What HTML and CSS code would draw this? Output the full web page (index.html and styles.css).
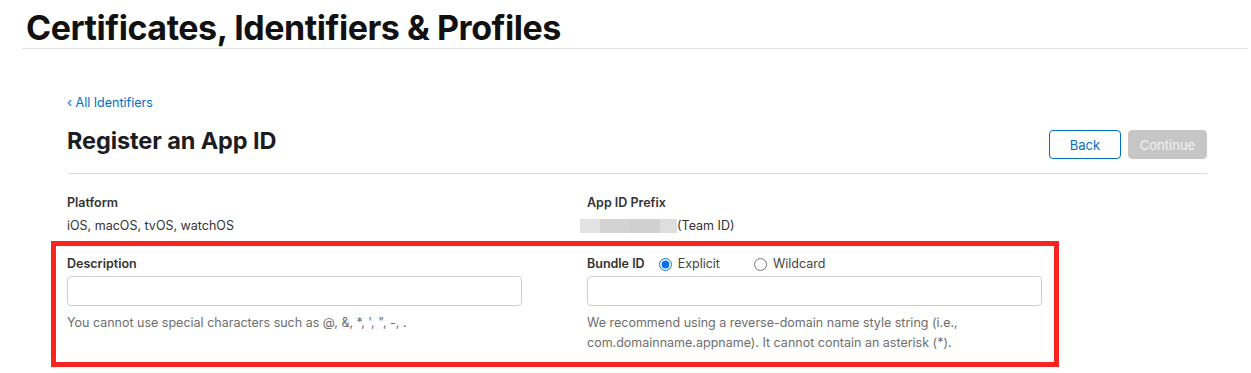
FILE: index.html
```html
<!DOCTYPE html>
<html lang="en">
<head>
<meta charset="utf-8">
<title>Register an App ID</title>
<link rel="stylesheet" href="styles.css">
</head>
<body>
<header class="topbar">
  <h1 class="page-title">Certificates, Identifiers &amp; Profiles</h1>
</header>
<main class="content">
  <a class="back-link" href="#"><span class="chev">‹</span> All Identifiers</a>
  <div class="title-row">
    <h2 class="section-title">Register an App ID</h2>
    <div class="actions">
      <button class="btn btn-back" type="button">Back</button>
      <button class="btn btn-continue" type="button" disabled>Continue</button>
    </div>
  </div>
  <div class="info-row">
    <div class="col">
      <div class="label">Platform</div>
      <div class="value">iOS, macOS, tvOS, watchOS</div>
    </div>
    <div class="col">
      <div class="label">App ID Prefix</div>
      <div class="value prefix"><span class="redact"><span class="r1"></span><span class="r2"></span><span class="r3"></span><span class="r4"></span></span>(Team ID)</div>
    </div>
  </div>
  <div class="highlight">
    <div class="form-row">
      <div class="col">
        <label class="label" for="desc">Description</label>
        <input class="field" id="desc" type="text">
        <p class="hint">You cannot use special characters such as @, &amp;, *, ', ", -, .</p>
      </div>
      <div class="col">
        <div class="label bundle-label">
          <span>Bundle ID</span>
          <label class="radio"><input type="radio" name="bid" checked><span>Explicit</span></label>
          <label class="radio radio-wild"><input type="radio" name="bid"><span>Wildcard</span></label>
        </div>
        <input class="field" type="text">
        <p class="hint">We recommend using a reverse-domain name style string (i.e.,<br>com.domainname.appname). It cannot contain an asterisk (*).</p>
      </div>
    </div>
  </div>
</main>
</body>
</html>
```

FILE: styles.css
```css
* { box-sizing: border-box; }
html, body { margin: 0; padding: 0; background: #fff; }
body {
  font-family: Inter, "Noto Sans", "Liberation Sans", sans-serif;
  color: #333;
  width: 1251px;
  overflow: hidden;
}
.topbar {
  margin: 0 4px 0 22px;
  border-bottom: 1px solid #e2e2e2;
}
.page-title {
  margin: 0;
  padding: 8px 0 0 4px;
  font-size: 34px;
  line-height: 40px;
  font-weight: 700;
  letter-spacing: -0.45px;
  color: #111;
}
.content {
  padding: 0 44px 0 67px;
}
.back-link {
  display: block;
  margin-top: 45px;
  font-size: 12.5px;
  line-height: 16px;
  color: #0070c9;
  text-decoration: none;
}
.chev { font-size: 13px; }
.title-row {
  display: flex;
  justify-content: space-between;
  align-items: flex-start;
  margin-top: 15px;
  padding-bottom: 14px;
  border-bottom: 1px solid #dcdcdc;
}
.section-title {
  margin: 0;
  font-size: 23.5px;
  line-height: 30px;
  font-weight: 700;
  color: #1d1d1f;
  letter-spacing: -0.1px;
}
.actions {
  display: flex;
  gap: 7px;
  margin-top: 4px;
}
.btn {
  height: 29px;
  border-radius: 4px;
  font-family: inherit;
  font-size: 13px;
  padding: 0;
}
.btn-back {
  width: 72px;
  background: #fff;
  border: 1px solid #0070c9;
  color: #0070c9;
}
.btn-continue {
  width: 79px;
  background: #c6c6c6;
  border: 1px solid #c6c6c6;
  color: #f2f2f2;
}
.info-row, .form-row {
  display: grid;
  grid-template-columns: 520px 520px;
}
.info-row { padding-top: 21px; }
.label {
  display: block;
  font-size: 12.5px;
  line-height: 16px;
  font-weight: 600;
  color: #333;
}
.value {
  margin-top: 7px;
  font-size: 12.5px;
  line-height: 16px;
  color: #333;
}
.prefix { display: flex; align-items: center; margin-left: -7px; }
.redact { display: flex; height: 14px; }
.redact span { display: block; height: 14px; }
.r1 { width: 20px; background: #e3e3e3; }
.r2 { width: 30px; background: #d3d3d3; }
.r3 { width: 30px; background: #d0d0d0; }
.r4 { width: 17px; background: #dedede; }
.highlight {
  margin: 7px 0 0 -16px;
  width: 1008px;
  border: 5px solid #fb2320;
  padding: 10px 0 9px 11px;
}
.bundle-label { display: flex; align-items: center; }
.radio {
  display: flex;
  align-items: center;
  font-weight: 400;
  color: #444;
}
.radio input {
  width: 13px;
  height: 13px;
  margin: 0 6px 0 14px;
  accent-color: #0a72ee;
}
.radio-wild input { margin-left: 34px; }
.field {
  display: block;
  margin-top: 4px;
  width: 455px;
  height: 30px;
  border: 1px solid #cfcfcf;
  border-radius: 4px;
  background: #fff;
}
.hint {
  margin: 7px 0 0;
  font-size: 12.5px;
  line-height: 20px;
  color: #6e6e6e;
}
```
